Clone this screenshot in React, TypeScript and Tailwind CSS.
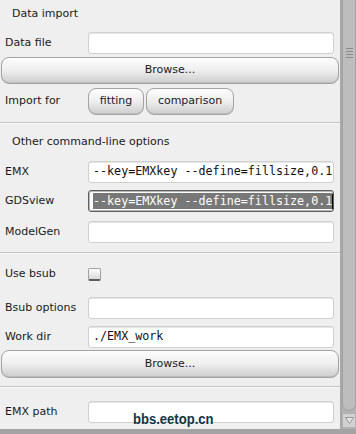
import React from "react";

function Field({ children, focused }: { children?: React.ReactNode; focused?: boolean }) {
  return (
    <div
      className={`flex-1 h-[22px] mr-[6px] rounded-[3px] bg-white flex items-center pl-[4px] overflow-hidden whitespace-nowrap font-['DejaVu_Sans_Mono',monospace] text-[11.7px] text-[#111] ${
        focused
          ? "border border-[#5e5e5e] shadow-[inset_0_0_0_1px_#b8b8b8]"
          : "border border-[#d0d0d0] shadow-[inset_0_1px_0_#e6e6e6]"
      }`}
    >
      {children}
    </div>
  );
}

function Row({ label, children, className = "" }: { label: string; children: React.ReactNode; className?: string }) {
  return (
    <div className={`flex items-center h-[22px] ${className}`}>
      <div className="w-[88px] pl-[5px] shrink-0">{label}</div>
      {children}
    </div>
  );
}

function Btn({ children, className = "" }: { children: React.ReactNode; className?: string }) {
  return (
    <button
      type="button"
      className={`flex items-center justify-center rounded-[8px] border border-[#a3a3a3] bg-gradient-to-b from-[#fdfdfd] via-[#eeeeee] to-[#cdcdcd] shadow-[inset_0_-1px_0_#bdbdbd] text-[#1a1a1a] ${className}`}
    >
      {children}
    </button>
  );
}

function Sep({ className = "" }: { className?: string }) {
  return <div className={`h-px bg-[#c3c3c3] shadow-[0_1px_0_#fafafa] ${className}`} />;
}

export default function App() {
  return (
    <div className="w-[356px] h-[434px] flex flex-col bg-[#efefef] font-['DejaVu_Sans',sans-serif] text-[11px] text-[#1a1a1a] relative overflow-hidden">
      <div className="flex flex-1 min-h-0">
        <div className="w-[340px] flex flex-col">
          <div className="h-[28px] flex items-center pl-[12px]">Data import</div>
          <Row label="Data file" className="mt-[4px]">
            <Field />
          </Row>
          <Btn className="mt-[3px] h-[27px] mx-[1px]">Browse...</Btn>
          <div className="flex items-center h-[27px] mt-[4px]">
            <div className="w-[88px] pl-[5px] shrink-0">Import for</div>
            <Btn className="h-[27px] w-[56px]">fitting</Btn>
            <Btn className="h-[27px] w-[88px] ml-[2px]">comparison</Btn>
          </div>
          <Sep className="mt-[7px]" />
          <div className="h-[38px] flex items-center pl-[12px]">Other command-line options</div>
          <Row label="EMX">
            <Field>--key=EMXkey --define=fillsize,0.1</Field>
          </Row>
          <Row label="GDSview" className="mt-[7px]">
            <Field focused>
              <span className="bg-[#787878] text-white leading-[16px]">--key=EMXkey --define=fillsize,0.1</span>
              <span className="w-px h-[15px] bg-black" />
            </Field>
          </Row>
          <Row label="ModelGen" className="mt-[9px]">
            <Field />
          </Row>
          <Sep className="mt-[9px]" />
          <div className="flex items-center h-[13px] mt-[15px]">
            <div className="w-[88px] pl-[5px] shrink-0">Use bsub</div>
            <div className="w-[13px] h-[13px] rounded-[2px] border border-[#a0a0a0] border-b-[2px] border-b-[#5c5c5c] bg-gradient-to-b from-white to-[#d8d8d8]" />
          </div>
          <Row label="Bsub options" className="mt-[16px]">
            <Field />
          </Row>
          <Row label="Work dir" className="mt-[7px]">
            <Field>./EMX_work</Field>
          </Row>
          <Btn className="mt-[2px] h-[28px] mx-[1px]">Browse...</Btn>
          <Sep className="mt-[8px]" />
          <Row label="EMX path" className="mt-[14px]">
            <Field />
          </Row>
        </div>
        <div className="w-[16px] flex flex-col bg-[#b4b4b4] border-l-2 border-[#a8a8a8]">
          <div className="flex-1 rounded-b-[7px] bg-[#bdbdbd] border-b border-x border-[#a2a2a2] flex flex-col items-center pt-[48px] gap-[2px]">
            <div className="w-[7px] h-px bg-[#8a8a8a]" />
            <div className="w-[7px] h-px bg-[#8a8a8a]" />
            <div className="w-[7px] h-px bg-[#8a8a8a]" />
            <div className="w-[7px] h-px bg-[#8a8a8a]" />
          </div>
          <div className="h-[15px] mt-[2px] mb-[1px] bg-[#d2d2d2] border border-[#b0b0b0] flex items-center justify-center">
            <svg width="9" height="7" viewBox="0 0 9 7">
              <path d="M0.5 0.5 L8.5 0.5 L4.5 6.5 Z" fill="#e6e6e6" stroke="#9a9a9a" strokeWidth="1" />
            </svg>
          </div>
        </div>
      </div>
      <div className="h-[5px] bg-[#a3a3a3]" />
      <div className="absolute left-[133px] top-[412px] origin-left scale-x-[0.9] font-['Liberation_Sans',sans-serif] font-bold text-[14.5px] leading-[15px] text-[#0f3646]">
        bbs.eetop.cn
      </div>
    </div>
  );
}
